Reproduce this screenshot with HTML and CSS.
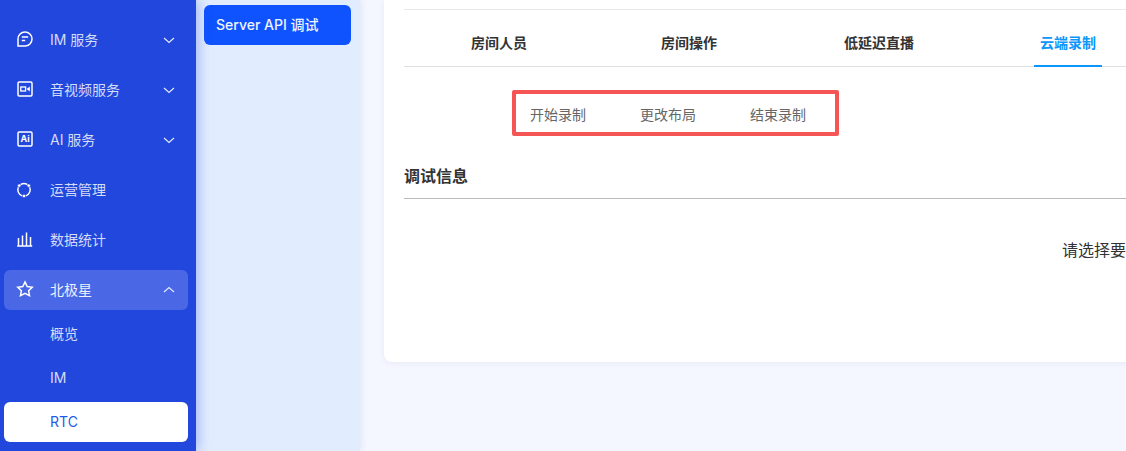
FILE: index.html
```html
<!DOCTYPE html>
<html lang="zh-CN">
<head>
  <meta charset="UTF-8">
  <meta name="viewport" content="width=device-width, initial-scale=1.0">
  <title>Server API 调试</title>
  <link rel="stylesheet" href="styles.css">
</head>
<body>
  <div class="app">
    <!-- Main Sidebar -->
    <nav class="sidebar">
      <div class="nav-item">
        <svg class="nav-icon" viewBox="0 0 16 16"><path d="M1 15V8a7 7 0 1 1 7 7z"/><path d="M4.800 6h6.400M4.800 9.400h3.400"/></svg>
        <span class="nav-label">IM 服务</span>
        <svg class="nav-arrow" viewBox="0 0 12 12"><path d="M1 4l5 4.500L11 4"/></svg>
      </div>
      <div class="nav-item">
        <svg class="nav-icon" viewBox="0 0 16 16"><rect x="1" y="1" width="14" height="14" rx="1.2"/><rect class="thin" x="3.800" y="6" width="4.800" height="4"/><path class="solid" d="M9.600 8l3.200-2.600v5.200z"/></svg>
        <span class="nav-label">音视频服务</span>
        <svg class="nav-arrow" viewBox="0 0 12 12"><path d="M1 4l5 4.500L11 4"/></svg>
      </div>
      <div class="nav-item">
        <svg class="nav-icon" viewBox="0 0 16 16"><rect x="1" y="1" width="14" height="14" rx="1.2"/><text class="icon-text" x="8" y="11.300" text-anchor="middle">Ai</text></svg>
        <span class="nav-label">AI 服务</span>
        <svg class="nav-arrow" viewBox="0 0 12 12"><path d="M1 4l5 4.500L11 4"/></svg>
      </div>
      <div class="nav-item">
        <svg class="nav-icon" viewBox="0 0 16 16"><circle cx="7" cy="8.800" r="6.200"/><circle class="node" cx="2.200" cy="4.600" r="1.700"/><circle class="node" cx="11.800" cy="4.600" r="1.700"/><circle class="node" cx="7" cy="15" r="1.700"/></svg>
        <span class="nav-label">运营管理</span>
      </div>
      <div class="nav-item">
        <svg class="nav-icon" viewBox="0 0 16 16"><path d="M.2 15h15M1.500 15V7M5.500 15V4.500M9.500 15V1.500M13.500 15V6"/></svg>
        <span class="nav-label">数据统计</span>
      </div>
      <div class="nav-item open">
        <svg class="nav-icon" viewBox="0 0 16 16"><path d="M8 .9l2.200 4.600 5 .7-3.600 3.500.9 5L8 12.300l-4.500 2.400.9-5L.8 6.200l5-.7z"/></svg>
        <span class="nav-label">北极星</span>
        <svg class="nav-arrow" viewBox="0 0 12 12"><path d="M1 8l5-4.500L11 8"/></svg>
      </div>
      <div class="sub-list">
        <div class="sub-item">概览</div>
        <div class="sub-item">IM</div>
        <div class="sub-item active">RTC</div>
      </div>
    </nav>

    <!-- Second Level Menu -->
    <aside class="submenu">
      <div class="submenu-item">Server API 调试</div>
    </aside>

    <main class="content">
      <section class="card">
        <div class="top-rule"></div>
        <div class="tabs">
          <div class="tab">房间人员</div>
          <div class="tab">房间操作</div>
          <div class="tab">低延迟直播</div>
          <div class="tab current"><span>云端录制</span></div>
        </div>
        <div class="actions">
          <span>开始录制</span>
          <span>更改布局</span>
          <span>结束录制</span>
        </div>
        <h2 class="debug-title">调试信息</h2>
        <p class="debug-empty">请选择要</p>
      </section>
    </main>
  </div>
</body>
</html>
```

FILE: styles.css
```css
/* General Styles */
* {
  box-sizing: border-box;
}

html, body {
  margin: 0;
  padding: 0;
  height: 451px;
  overflow: hidden;
}

body {
  font-family: 'Inter', 'Noto Sans CJK SC', sans-serif;
  font-size: 14px;
  background: #f4f7ff;
}

.app {
  display: flex;
  width: 1126px;
  height: 451px;
  overflow: hidden;
}

/* Main Sidebar */
.sidebar {
  flex: 0 0 196px;
  padding: 20px 8px 0 4px;
  background: #2247dc;
  color: #d5dcf8;
  position: relative;
  z-index: 2;
  box-shadow: 2px 0 12px rgba(34, 71, 220, 0.35);
}

.nav-item {
  display: flex;
  align-items: center;
  height: 40px;
  margin-bottom: 10px;
  padding: 0 13px 2px 12px;
  border-radius: 6px;
}

.nav-item.open {
  margin-bottom: 0;
  background: #4a68e6;
  color: #eef1fd;
}

.nav-icon {
  flex: none;
  width: 16px;
  height: 16px;
  margin-left: 1px;
  fill: none;
  stroke: #fff;
  stroke-width: 1.5;
  overflow: visible;
}

.nav-icon .solid {
  fill: #fff;
  stroke: none;
}

.nav-icon .node {
  fill: #fff;
  stroke: #2247dc;
  stroke-width: 0.6;
}

.nav-icon .thin {
  stroke-width: 1.3;
}

.nav-icon .icon-text {
  fill: #fff;
  stroke: none;
  font-size: 9px;
  font-weight: 700;
}

.nav-label {
  flex: 1;
  margin-left: 17px;
}

.nav-arrow {
  flex: none;
  width: 12px;
  height: 12px;
  margin-top: 2px;
  fill: none;
  stroke: #e4e9fb;
  stroke-width: 1.2;
}

.sub-list {
  display: flex;
  flex-direction: column;
  gap: 4px;
  padding-top: 4px;
}

.sub-item {
  display: flex;
  align-items: center;
  height: 40px;
  padding: 0 0 2px 46px;
  border-radius: 6px;
}

.sub-item.active {
  background: #fff;
  color: #1f5ce8;
}

/* Second Level Menu */
.submenu {
  flex: 0 0 164px;
  padding: 5px 9px 0 8px;
  background: #e1edff;
  position: relative;
  z-index: 1;
  box-shadow: 1px 0 7px rgba(40, 60, 120, 0.1);
}

.submenu-item {
  display: flex;
  align-items: center;
  height: 40px;
  padding: 0 0 2px 12px;
  border-radius: 6px;
  background: #0f53ff;
  color: #f0f4ff;
  font-weight: 500;
}

/* Content */
.content {
  flex: 0 0 900px;
  padding-left: 24px;
}

.card {
  height: 362px;
  padding: 9px 20px 0;
  border-radius: 0 0 8px 8px;
  background: #fff;
  box-shadow: 0 1px 6px rgba(40, 60, 120, 0.07);
}

.top-rule {
  border-top: 1px solid #e8e8e8;
}

.tabs {
  display: flex;
  height: 57px;
  border-bottom: 1px solid #e0e0e0;
}

.tab {
  flex: 0 0 190px;
  display: flex;
  align-items: center;
  justify-content: center;
  padding-top: 8px;
  color: #333;
  font-weight: 600;
}

.tab.current {
  padding: 0 2px 0 0;
  color: #0d96fb;
}

.tab.current span {
  display: flex;
  align-items: center;
  justify-content: center;
  width: 68px;
  height: 57px;
  padding-top: 8px;
  border-bottom: 2px solid #0d96fb;
  margin-bottom: -1px;
}

/* Highlighted action row */
.actions {
  display: flex;
  gap: 54px;
  align-items: center;
  width: 327px;
  height: 46px;
  margin: 23px 0 0 108px;
  padding: 1px 0 0 14px;
  border: 4px solid #f55555;
  border-radius: 2px;
  color: #666;
}

.debug-title {
  margin: 28px 0 0;
  padding-bottom: 10px;
  border-bottom: 1px solid #bbb;
  color: #333;
  font-size: 16px;
  font-weight: 600;
  line-height: 24px;
}

.debug-empty {
  margin: 39px 0 0;
  padding-left: 658px;
  color: #333;
  font-size: 16px;
  line-height: 24px;
  white-space: nowrap;
}
```
